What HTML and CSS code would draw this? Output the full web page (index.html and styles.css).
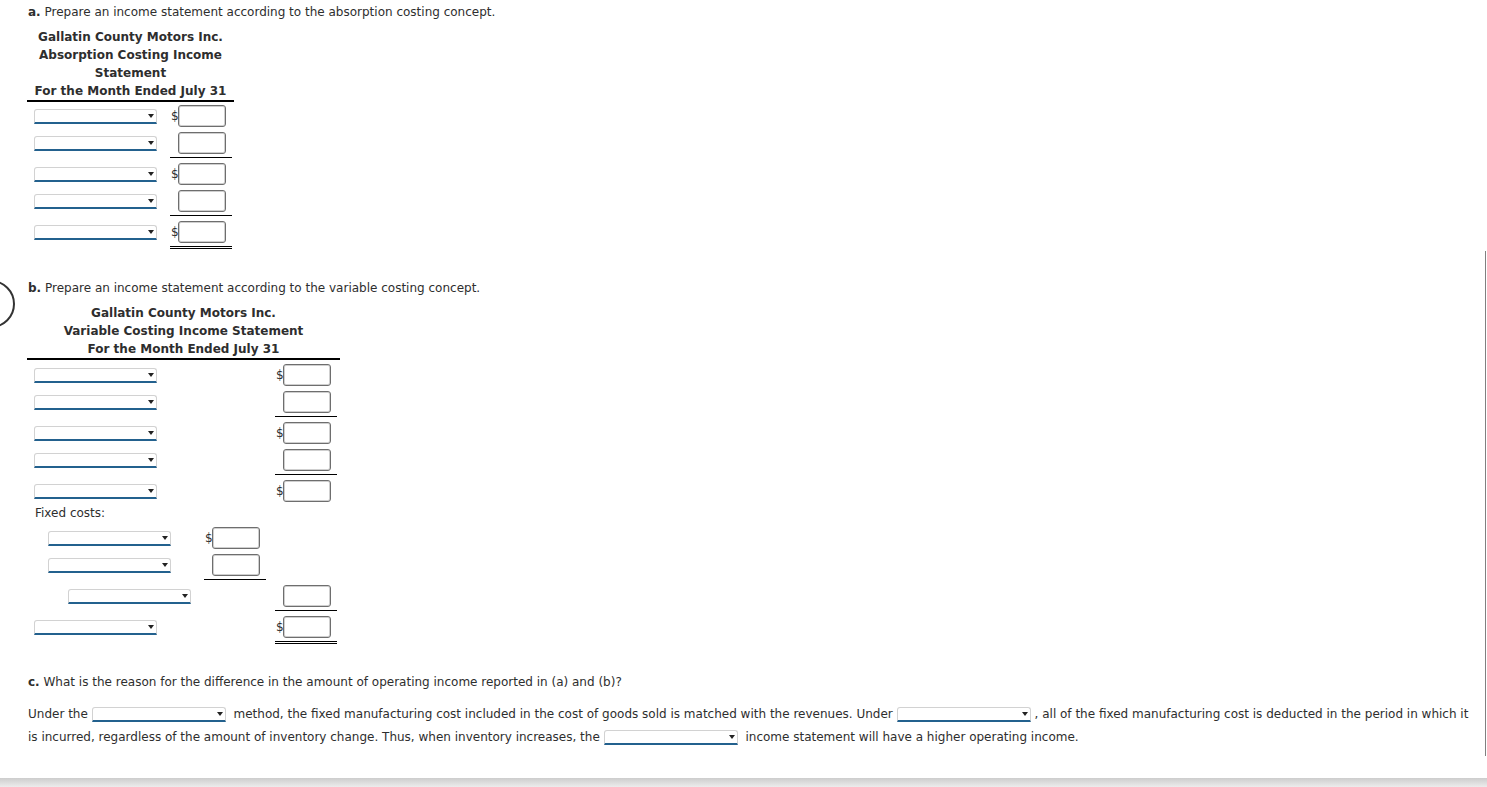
FILE: index.html
```html
<!DOCTYPE html>
<html lang="en">
<head>
  <meta charset="UTF-8">
  <title>Absorption and Variable Costing</title>
  <link rel="stylesheet" href="styles.css">
</head>
<body>

  <div class="page">

    <!-- part a -->
    <p class="prompt"><b>a.</b> Prepare an income statement according to the absorption costing concept.</p>
    <div class="statement statement-a">
      <div class="heading">
        <div>Gallatin County Motors Inc.</div>
        <div>Absorption Costing Income Statement</div>
        <div>For the Month Ended July 31</div>
      </div>
      <div class="lines">
        <div class="label"><span class="pick"><span class="caret"></span></span></div>
        <div class="amount"><span class="dollar">$</span><input class="box" type="text"></div>

        <div class="label"><span class="pick"><span class="caret"></span></span></div>
        <div class="amount total"><input class="box" type="text"></div>

        <div class="label"><span class="pick"><span class="caret"></span></span></div>
        <div class="amount"><span class="dollar">$</span><input class="box" type="text"></div>

        <div class="label"><span class="pick"><span class="caret"></span></span></div>
        <div class="amount total"><input class="box" type="text"></div>

        <div class="label"><span class="pick"><span class="caret"></span></span></div>
        <div class="amount grand"><span class="dollar">$</span><input class="box" type="text"></div>
      </div>
    </div>

    <!-- part b -->
    <p class="prompt part-gap part-b"><b>b.</b> Prepare an income statement according to the variable costing concept.</p>
    <div class="statement statement-b">
      <div class="heading">
        <div>Gallatin County Motors Inc.</div>
        <div>Variable Costing Income Statement</div>
        <div>For the Month Ended July 31</div>
      </div>
      <div class="lines">
        <div class="label"><span class="pick"><span class="caret"></span></span></div>
        <div class="amount col3"><span class="dollar">$</span><input class="box" type="text"></div>

        <div class="label"><span class="pick"><span class="caret"></span></span></div>
        <div class="amount col3 total"><input class="box" type="text"></div>

        <div class="label"><span class="pick"><span class="caret"></span></span></div>
        <div class="amount col3"><span class="dollar">$</span><input class="box" type="text"></div>

        <div class="label"><span class="pick"><span class="caret"></span></span></div>
        <div class="amount col3 total"><input class="box" type="text"></div>

        <div class="label"><span class="pick"><span class="caret"></span></span></div>
        <div class="amount col3"><span class="dollar">$</span><input class="box" type="text"></div>

        <div class="group-title">Fixed costs:</div>

        <div class="label indent1"><span class="pick"><span class="caret"></span></span></div>
        <div class="amount col2"><span class="dollar">$</span><input class="box" type="text"></div>

        <div class="label indent1"><span class="pick"><span class="caret"></span></span></div>
        <div class="amount col2 total"><input class="box" type="text"></div>

        <div class="label indent2"><span class="pick"><span class="caret"></span></span></div>
        <div class="amount col3 total"><input class="box" type="text"></div>

        <div class="label"><span class="pick"><span class="caret"></span></span></div>
        <div class="amount col3 grand"><span class="dollar">$</span><input class="box" type="text"></div>
      </div>
    </div>

    <!-- part c -->
    <p class="prompt part-gap"><b>c.</b> What is the reason for the difference in the amount of operating income reported in (a) and (b)?</p>
    <p class="answer"><span>Under the</span> <span class="pick wide"><span class="caret"></span></span> <span>method, the fixed manufacturing cost included in the cost of goods sold is matched with the revenues. Under</span> <span class="pick wide"><span class="caret"></span></span><span>, all of the fixed manufacturing cost is deducted in the period in which it</span> <span>is incurred, regardless of the amount of inventory change. Thus, when inventory increases, the</span> <span class="pick wide"><span class="caret"></span></span> <span>income statement will have a higher operating income.</span></p>

    <div class="marker"></div>
  </div>

  <div class="frame-edge"></div>
  <div class="frame-bottom"></div>

</body>
</html>
```

FILE: styles.css
```css
body {
  margin: 0;
  font-family: "DejaVu Sans", Verdana, sans-serif;
  font-size: 12px;
  color: #2e2e2e;
  background: #fff;
  overflow: hidden;
}

.page {
  position: relative;
  padding: 3px 0 0 28px;
  width: 1450px;
}

.prompt {
  margin: 0;
  line-height: 18px;
}

.part-gap {
  margin-top: 29px;
}

.part-b {
  margin-top: 30px;
}

.statement {
  margin: 7px 0 0 -1px;
}

.statement-a {
  width: 207px;
}

.statement-b {
  width: 313px;
}

.heading {
  font-weight: bold;
  text-align: center;
  line-height: 18px;
  border-bottom: 2px solid #000;
}

.lines {
  display: grid;
  align-items: start;
  padding-top: 1px;
}

.statement-a .lines {
  grid-template-columns: 143px 62px;
  padding-top: 0;
}

.statement-b .lines {
  grid-template-columns: 177px 62px 9px 62px;
}

.label {
  grid-column: 1;
  display: flex;
  align-items: center;
  height: 22px;
  padding: 3px 0 2px 7px;
}

.indent1 {
  padding-left: 21px;
}

.indent2 {
  padding-left: 41px;
}

.group-title {
  grid-column: 1 / -1;
  line-height: 18px;
  padding: 0 0 2px 8px;
}

.amount {
  display: flex;
  align-items: center;
  padding: 3px 0 2px 8px;
}

.col2 {
  grid-column: 2;
}

.col3 {
  grid-column: 4;
}

.total {
  padding-bottom: 3px;
  border-bottom: 1px solid #000;
  margin-bottom: 2px;
}

.grand {
  padding-bottom: 3px;
  border-bottom: 3px double #000;
}

.dollar {
  width: 7px;
  margin-left: -7px;
  line-height: 22px;
}

.box {
  box-sizing: border-box;
  width: 48px;
  height: 22px;
  margin: 0;
  padding: 0 3px;
  border: 1px solid #6e6e6e;
  border-radius: 3px;
  box-shadow: inset 0 0 0 1px #cfcfcf;
  background: #fff;
  font: inherit;
}

/* dropdowns */
.pick {
  display: inline-flex;
  align-items: center;
  justify-content: flex-end;
  box-sizing: border-box;
  width: 123px;
  height: 15px;
  padding-right: 2px;
  border: 1px solid #d2d2d2;
  border-bottom: 2px solid #23618e;
  border-radius: 3px 3px 0 0;
  background: #fff;
}

.caret {
  width: 0;
  height: 0;
  border-left: 3.5px solid transparent;
  border-right: 3.5px solid transparent;
  border-top: 4px solid #222;
}

.answer {
  margin: 12px 0 0;
  line-height: 23px;
}

.pick.wide {
  width: 134px;
  vertical-align: middle;
  margin-right: 4px;
}

/* decorations around the frame */
.marker {
  position: absolute;
  left: -33px;
  top: 280px;
  width: 48px;
  height: 48px;
  box-sizing: border-box;
  border: 2px solid #333;
  border-radius: 50%;
}

.frame-edge {
  position: fixed;
  left: 1485px;
  top: 251px;
  width: 1px;
  height: 505px;
  background: #808080;
}

.frame-bottom {
  position: fixed;
  left: 0;
  right: 0;
  bottom: 0;
  height: 9px;
  background: linear-gradient(to bottom, #cdcdcd, #ececec);
}
```
